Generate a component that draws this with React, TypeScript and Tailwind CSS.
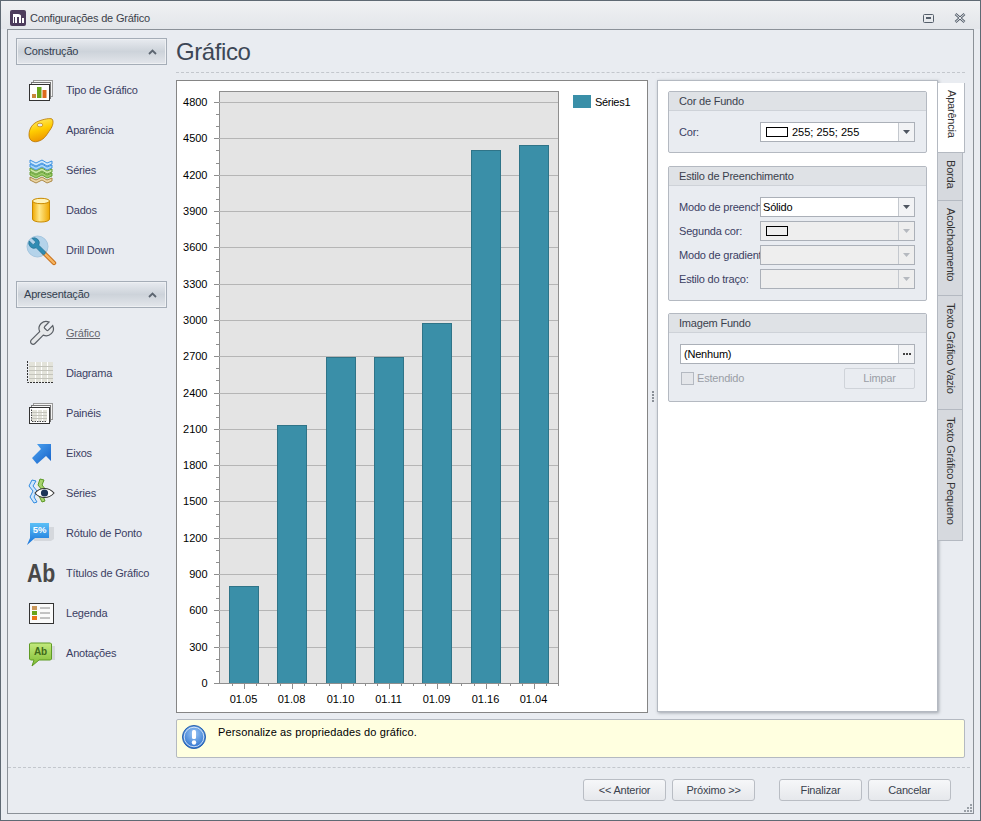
import React from "react";

const wrench =
  "M14.7 6.3a1 1 0 0 0 0 1.4l1.6 1.6a1 1 0 0 0 1.4 0l3.77-3.77a6 6 0 0 1-7.94 7.94l-6.91 6.91a2.12 2.12 0 0 1-3-3l6.91-6.91a6 6 0 0 1 7.94-7.94l-3.76 3.76z";

const Svg: React.FC<{ children: React.ReactNode }> = ({ children }) => (
  <svg width="32" height="32" viewBox="0 0 32 32" className="shrink-0">
    {children}
  </svg>
);

const CardStack = () => (
  <>
    <rect x="7.5" y="6.5" width="19" height="16" fill="#f4f4f4" stroke="#9a9a9a" />
    <rect x="5.5" y="8.5" width="19" height="16" fill="#f8f8f8" stroke="#777" />
    <rect x="3.5" y="10.5" width="20" height="16" fill="#fff" stroke="#333" />
  </>
);

const ChartTypeIcon = () => (
  <Svg>
    <CardStack />
    <rect x="6" y="20" width="4" height="4" fill="#c9873b" />
    <rect x="11" y="13" width="4.5" height="11" fill="#6aa51c" />
    <rect x="16.5" y="16" width="4" height="8" fill="#dd6a1c" />
  </Svg>
);

const PaletteIcon = () => (
  <Svg>
    <defs>
      <linearGradient id="pal" x1="0" y1="0" x2="0.3" y2="1">
        <stop offset="0" stopColor="#fff07a" />
        <stop offset="0.55" stopColor="#ffcc00" />
        <stop offset="1" stopColor="#ee9800" />
      </linearGradient>
    </defs>
    <path
      d="M26 5c2 2 1 7-2 11s-5 9-11 11c-5 2-10 0-10-6 0-7 4-12 10-14 5-2 11-3 13-2z"
      fill="url(#pal)"
      stroke="#b87400"
      strokeWidth="0.8"
    />
    <ellipse cx="14" cy="11" rx="2.8" ry="1.8" fill="#e9ecf1" stroke="#b87400" strokeWidth="0.6" />
  </Svg>
);

const Wave: React.FC<{ y: number; fill: string; stroke: string }> = ({ y, fill, stroke }) => (
  <path
    d={`M4 ${y}l6 3 6-3 5 3 5-2v3l-5 2-5-3-6 3-6-3z`}
    fill={fill}
    stroke={stroke}
    strokeWidth="0.9"
  />
);

const SeriesIcon = () => (
  <Svg>
    <Wave y={6} fill="#cfe8fc" stroke="#2f8ae0" />
    <Wave y={10} fill="#a9d6f8" stroke="#2f8ae0" />
    <Wave y={14} fill="#cbe6a8" stroke="#5b9a25" />
    <Wave y={18} fill="#9ccb6b" stroke="#5b9a25" />
    <Wave y={23} fill="#ecd6a6" stroke="#a5803a" />
  </Svg>
);

const DataIcon = () => (
  <Svg>
    <defs>
      <linearGradient id="cyl" x1="0" y1="0" x2="1" y2="0">
        <stop offset="0" stopColor="#f0a800" />
        <stop offset="0.4" stopColor="#ffe88a" />
        <stop offset="1" stopColor="#efa700" />
      </linearGradient>
    </defs>
    <path d="M6.5 7v18c0 4 17 4 17 0V7z" fill="url(#cyl)" stroke="#c98a00" />
    <ellipse cx="15" cy="7" rx="8.5" ry="2.7" fill="#fff3b8" stroke="#c98a00" />
  </Svg>
);

const DrillIcon = () => (
  <Svg>
    <circle cx="11.5" cy="12.5" r="10.5" fill="#b4d3ea" stroke="#a5c6df" />
    <path d="M18 19l10 10" stroke="#c9711c" strokeWidth="4.4" strokeLinecap="round" />
    <path d="M18 19l10 10" stroke="#f5b562" strokeWidth="2.4" strokeLinecap="round" />
    <g transform="translate(1 2) scale(0.88) translate(24 0) scale(-1 1)">
      <path d={wrench} fill="#2f8cb3" stroke="#1f6a8c" strokeWidth="0.7" />
    </g>
  </Svg>
);

const WrenchIcon = () => (
  <Svg>
    <g transform="translate(1 2) scale(1.2)">
      <path d={wrench} fill="#e6e8ea" stroke="#5a5f66" strokeWidth="1" />
    </g>
  </Svg>
);

const GridLines: React.FC<{ x: number; y: number; w: number; h: number; cols: number; rows: number }> = ({
  x,
  y,
  w,
  h,
  cols,
  rows,
}) => (
  <>
    <rect x={x} y={y} width={w} height={h} fill="#e3e3da" />
    {Array.from({ length: cols - 1 }, (_, i) => (
      <path key={i} d={`M${Math.floor(x + ((i + 1) * w) / cols) + 0.5} ${y}v${h}`} stroke="#fff" />
    ))}
    {Array.from({ length: rows - 1 }, (_, i) => (
      <path key={i} d={`M${x} ${Math.floor(y + ((i + 1) * h) / rows) + 0.5}h${w}`} stroke="#c4c4bc" />
    ))}
  </>
);

const DiagramIcon = () => (
  <Svg>
    <GridLines x={3} y={5} w={24} h={20} cols={4} rows={5} />
    <path d="M1.5 4v21.5H27" fill="none" stroke="#333" strokeDasharray="2 1" />
  </Svg>
);

const PanesIcon = () => (
  <Svg>
    <CardStack />
    <GridLines x={6} y={13} w={15} h={11} cols={3} rows={4} />
    <path d="M5.5 12.5v12H21" fill="none" stroke="#444" strokeDasharray="1.5 1" />
  </Svg>
);

const AxisIcon = () => (
  <Svg>
    <defs>
      <linearGradient id="arr" x1="0" y1="0" x2="1" y2="1">
        <stop offset="0" stopColor="#4fa6f2" />
        <stop offset="1" stopColor="#1560c8" />
      </linearGradient>
    </defs>
    <path d="M11 7h14v17l-5-5-9 8-5-6 9-9z" fill="url(#arr)" />
  </Svg>
);

const SeriesViewIcon = () => (
  <Svg>
    <path d="M6 3l-3 6 4 5-3 6 4 6 3-1-3-5 3-6-4-5 3-5z" fill="#cfe6fb" stroke="#2f8ae0" />
    <path d="M14 2l-2 6 4 5-3 6 3 6 3-1-2-5 3-6-4-5 2-5z" fill="#a8d36f" stroke="#5b9a25" />
    <path d="M9 16c5-6 14-6 19 0-5 6-14 6-19 0z" fill="#fff" stroke="#333" strokeWidth="1.1" />
    <circle cx="18.5" cy="16" r="3.6" fill="#1d3557" />
  </Svg>
);

const PercentIcon = () => (
  <Svg>
    <defs>
      <linearGradient id="bub" x1="0" y1="0" x2="0" y2="1">
        <stop offset="0" stopColor="#5cc0f7" />
        <stop offset="1" stopColor="#1570d8" />
      </linearGradient>
    </defs>
    <path d="M8 10h20v12l-3 2H8z" fill="#d5d8dd" />
    <path d="M4 6h19v15H9l-8 7 3-7z" fill="url(#bub)" />
    <text x="13.5" y="16" textAnchor="middle" fontSize="9.5" fontWeight="700" fill="#fff" fontFamily="Liberation Sans, sans-serif">
      5%
    </text>
  </Svg>
);

const TitlesIcon = () => (
  <Svg>
    <g transform="translate(1 25) scale(0.82 1)">
      <text fontSize="26" fontWeight="700" fill="#484848" fontFamily="Liberation Sans, sans-serif">
        Ab
      </text>
    </g>
  </Svg>
);

const LegendIcon = () => (
  <Svg>
    <rect x="3.5" y="6.5" width="24" height="20" fill="#fbfbfb" stroke="#333" />
    <rect x="6" y="9" width="5" height="4" fill="#c9975a" />
    <rect x="6" y="14" width="5" height="4" fill="#6aa51c" />
    <rect x="6" y="19" width="5" height="4" fill="#e9751b" />
    <path d="M14 11h10M14 16h10M14 21h10" stroke="#8a8a8a" />
  </Svg>
);

const NoteIcon = () => (
  <Svg>
    <defs>
      <linearGradient id="grn" x1="0" y1="0" x2="0" y2="1">
        <stop offset="0" stopColor="#c4ea7e" />
        <stop offset="1" stopColor="#7cbb30" />
      </linearGradient>
    </defs>
    <path d="M8 9h21v14H10z" fill="#d5d8dd" />
    <path d="M4.5 6h20l1 1v15l-1 1H13l-7 6 2-6H4.5l-1-1V7z" fill="url(#grn)" stroke="#5f9b25" />
    <text x="14.5" y="18" textAnchor="middle" fontSize="10" fontWeight="700" fill="#3f6a1a" fontFamily="Liberation Sans, sans-serif">
      Ab
    </text>
  </Svg>
);

const build = [
  { label: "Tipo de Gráfico", icon: <ChartTypeIcon /> },
  { label: "Aparência", icon: <PaletteIcon /> },
  { label: "Séries", icon: <SeriesIcon /> },
  { label: "Dados", icon: <DataIcon /> },
  { label: "Drill Down", icon: <DrillIcon /> },
];

const present = [
  { label: "Gráfico", icon: <WrenchIcon />, active: true },
  { label: "Diagrama", icon: <DiagramIcon /> },
  { label: "Painéis", icon: <PanesIcon /> },
  { label: "Eixos", icon: <AxisIcon /> },
  { label: "Séries", icon: <SeriesViewIcon /> },
  { label: "Rótulo de Ponto", icon: <PercentIcon /> },
  { label: "Títulos de Gráfico", icon: <TitlesIcon /> },
  { label: "Legenda", icon: <LegendIcon /> },
  { label: "Anotações", icon: <NoteIcon /> },
];

const Chevron = () => (
  <svg width="9" height="6" viewBox="0 0 9 6">
    <path d="M1 5l3.5-3.5L8 5" fill="none" stroke="#5c6570" strokeWidth="1.8" />
  </svg>
);

const GroupHeader: React.FC<{ title: string }> = ({ title }) => (
  <div className="h-[27px] flex items-center justify-between pl-[7px] pr-[9px] border border-[#a5adb7] bg-gradient-to-b from-[#e8ebf0] via-[#cdd3da] to-[#e3e6eb] text-[#333e4f] shadow-[inset_0_0_0_1px_#eef0f3]">
    <span>{title}</span>
    <Chevron />
  </div>
);

const NavRow: React.FC<{ label: string; icon: React.ReactNode; active?: boolean }> = ({ label, icon, active }) => (
  <div className="h-10 flex items-center gap-2 pl-[10px]">
    {icon}
    <span className={active ? "text-[#66666e] underline" : "text-[#3b4063]"}>{label}</span>
  </div>
);

const Sidebar = () => (
  <div className="w-[151px] shrink-0 mt-2">
    <GroupHeader title="Construção" />
    <div className="mt-[5px] mb-[11px]">
      {build.map((r) => (
        <NavRow key={r.label} {...r} />
      ))}
    </div>
    <GroupHeader title="Apresentação" />
    <div className="mt-[5px]">
      {present.map((r) => (
        <NavRow key={r.label} {...r} />
      ))}
    </div>
  </div>
);

const yLabels = [4800, 4500, 4200, 3900, 3600, 3300, 3000, 2700, 2400, 2100, 1800, 1500, 1200, 900, 600, 300, 0];
const bars = [
  { label: "01.05", x: 229, top: 586 },
  { label: "01.08", x: 277, top: 425 },
  { label: "01.10", x: 326, top: 357 },
  { label: "01.11", x: 374, top: 357 },
  { label: "01.09", x: 422, top: 323 },
  { label: "01.16", x: 471, top: 150 },
  { label: "01.04", x: 519, top: 145 },
];

// coordinates are page coords, shifted by the panel origin through the viewBox
const Chart = () => {
  const yOf = (v: number) => Math.round(683 - (v / 300) * 36.31) + 0.5;
  return (
    <svg width="470" height="631" viewBox="177 81 470 631" fontFamily="Liberation Sans, sans-serif" fontSize="11" letterSpacing="0">
      <rect x="219.5" y="91.5" width="339" height="592" fill="#e4e4e4" stroke="#8e8e8e" />
      {yLabels.map((v, i) => (
        <g key={v}>
          {i < 16 && <path d={`M214 ${yOf(v)}H558`} stroke="#b5b5b5" />}
          <path d={`M214 ${yOf(v)}H219`} stroke="#8e8e8e" />
          {i < 16 && (
            <>
              <path d={`M216 ${yOf(v - 100)}h3`} stroke="#8e8e8e" />
              <path d={`M216 ${yOf(v - 200)}h3`} stroke="#8e8e8e" />
            </>
          )}
          <text x="207.5" y={yOf(v) + 3.5} textAnchor="end" fill="#000">
            {v}
          </text>
        </g>
      ))}
      {bars.map((b) => (
        <g key={b.label}>
          <rect x={b.x + 0.5} y={b.top + 0.5} width="29" height={683 - b.top} fill="#3a8fa8" stroke="#2f7488" />
          <path d={`M${b.x + 15.5} 684v5`} stroke="#8e8e8e" />
          <path d={`M${b.x + 3.5} 684v2M${b.x + 27.5} 684v2M${b.x + 39.5} 684v2`} stroke="#8e8e8e" />
          <text x={b.x + 14.5} y="703" textAnchor="middle" fill="#000">
            {b.label}
          </text>
        </g>
      ))}
      <path d="M214 683.5H558" stroke="#8e8e8e" />
      <rect x="573" y="95" width="18" height="13" fill="#3a8fa8" />
      <text x="595" y="106" fill="#000" letterSpacing="-0.3">
        Séries1
      </text>
    </svg>
  );
};

const Arrow: React.FC<{ off?: boolean }> = ({ off }) => (
  <svg width="7" height="4" viewBox="0 0 7 4">
    <path d="M0 0h7L3.5 4z" fill={off ? "#b5b9bf" : "#4f5661"} />
  </svg>
);

const Combo: React.FC<{ children?: React.ReactNode; off?: boolean }> = ({ children, off }) => (
  <div className={`w-[155px] h-5 shrink-0 flex border border-[#abb0b8] ${off ? "bg-[#eeeeee]" : "bg-white"}`}>
    <div className="flex-1 flex items-center pl-[2px] text-black whitespace-nowrap overflow-hidden">{children}</div>
    <div className={`w-4 flex items-center justify-center border-l border-[#c4c8ce] ${off ? "bg-[#eeeeee]" : "bg-[#f2f3f5]"}`}>
      <Arrow off={off} />
    </div>
  </div>
);

const Swatch: React.FC<{ bg: string }> = ({ bg }) => (
  <span className={`inline-block w-[22px] h-[10px] border border-black ml-[3px] ${bg}`} />
);

const FieldRow: React.FC<{ label: string; children: React.ReactNode }> = ({ label, children }) => (
  <div className="flex items-center">
    <div className="w-[91px] pl-[10px] overflow-hidden whitespace-nowrap text-[#3b4063] shrink-0">{label}</div>
    {children}
  </div>
);

const GroupBox: React.FC<{ title: string; children: React.ReactNode; className: string }> = ({ title, children, className }) => (
  <div className={`w-[259px] border border-[#b4b9c1] rounded-[2px] bg-[#e9ecf1] ${className}`}>
    <div className="h-[19px] flex items-center pl-[10px] bg-[#dfe2e6] border-b border-[#ced2d8] text-[#3a3f4d]">{title}</div>
    {children}
  </div>
);

const PropsPanel = () => (
  <div className="w-[281px] shrink-0 h-[632px] bg-white border border-[#b4b9c1] shadow-[1px_1px_3px_#9ea3aa] pl-[10px] pt-[10px]">
    <GroupBox title="Cor de Fundo" className="h-[62px]">
      <div className="mt-[11px]">
        <FieldRow label="Cor:">
          <Combo>
            <Swatch bg="bg-white" />
            <span className="ml-1 tracking-normal">255; 255; 255</span>
          </Combo>
        </FieldRow>
      </div>
    </GroupBox>
    <GroupBox title="Estilo de Preenchimento" className="mt-[13px] h-[135px]">
      <div className="mt-[11px] flex flex-col gap-1">
        <FieldRow label="Modo de preenchimento:">
          <Combo>Sólido</Combo>
        </FieldRow>
        <FieldRow label="Segunda cor:">
          <Combo off>
            <Swatch bg="bg-[#eeeeee]" />
          </Combo>
        </FieldRow>
        <FieldRow label="Modo de gradiente:">
          <Combo off />
        </FieldRow>
        <FieldRow label="Estilo do traço:">
          <Combo off />
        </FieldRow>
      </div>
    </GroupBox>
    <GroupBox title="Imagem Fundo" className="mt-[12px] h-[89px]">
      <div className="mt-[11px] ml-[11px] w-[235px] h-5 flex border border-[#abb0b8] bg-white">
        <div className="flex-1 flex items-center pl-[3px] text-black">(Nenhum)</div>
        <div className="w-4 flex items-center justify-center gap-[1px] border-l border-[#c4c8ce] bg-[#f2f3f5]">
          <span className="w-[2px] h-[2px] bg-[#444]" />
          <span className="w-[2px] h-[2px] bg-[#444]" />
          <span className="w-[2px] h-[2px] bg-[#444]" />
        </div>
      </div>
      <div className="mt-1 ml-3 mr-[11px] flex items-center justify-between">
        <div className="flex items-center gap-[3px] text-[#9a9ea6]">
          <span className="w-[13px] h-[13px] border border-[#b4b9c1] bg-[#e4e6ea]" />
          Estendido
        </div>
        <div className="w-[71px] h-[21px] flex items-center justify-center border border-[#cfd3d9] rounded-[2px] text-[#9a9ea6]">Limpar</div>
      </div>
    </GroupBox>
  </div>
);

const tabs = [
  { label: "Aparência", h: "h-[70px]", active: true },
  { label: "Borda", h: "h-[48px]" },
  { label: "Acolchoamento", h: "h-[95px]" },
  { label: "Texto Gráfico Vazio", h: "h-[114px]" },
  { label: "Texto Gráfico Pequeno", h: "h-[131px]" },
];

const Tabs = () => (
  <div className="w-[27px] shrink-0 pt-[3px] flex flex-col">
    {tabs.map((t) => (
      <div
        key={t.label}
        className={`${t.h} flex items-start justify-center pt-[7px] border-r border-b border-[#b4b9c1] text-[#333] ${
          t.active ? "w-[27px] bg-white" : "w-[25px] bg-[#d6d9de]"
        }`}
      >
        <span className="whitespace-nowrap [writing-mode:vertical-rl]">{t.label}</span>
      </div>
    ))}
  </div>
);

const Btn: React.FC<{ label: string }> = ({ label }) => (
  <div className="w-[83px] h-[22px] flex items-center justify-center border border-[#b9bdc4] rounded-[3px] bg-gradient-to-b from-[#f6f7f9] to-[#e6e8ec] text-[#3a3f4d]">
    {label}
  </div>
);

export default function App() {
  return (
    <div className="w-[981px] h-[821px] flex flex-col bg-[#e9ecf1] border border-[#5f6973] text-[11px] leading-none tracking-[-0.2px] font-['Liberation_Sans',sans-serif]">
      <div className="h-[28px] shrink-0 flex items-center pt-[6px] pl-[9px] pr-[14px] bg-gradient-to-b from-[#f0f1f3] to-[#e3e6ea] text-[#3b3f4a]">
        <svg width="16" height="16" viewBox="0 0 16 16">
          <rect width="16" height="16" rx="2" fill="#4d3c5c" />
          <path d="M3 13V4h5c2 0 3 1 3 2v7H9V7H7v6H5V7H4v6zM12 13V8h2v5z" fill="#fff" />
        </svg>
        <span className="ml-1">Configurações de Gráfico</span>
        <svg className="ml-auto" width="11" height="9" viewBox="0 0 11 9">
          <rect x="0.5" y="0.5" width="10" height="8" rx="1" fill="none" stroke="#555f6b" />
          <rect x="3" y="3" width="5" height="2" fill="#555f6b" />
        </svg>
        <svg className="ml-[20px]" width="12" height="10" viewBox="0 0 12 10">
          <path d="M1.5 1l9 8M10.5 1l-9 8" stroke="#555f6b" strokeWidth="2.6" />
          <path d="M1.5 1l9 8M10.5 1l-9 8" stroke="#eef0f3" strokeWidth="1" />
        </svg>
      </div>
      <div className="flex-1 ml-[6px] mr-[6px] mb-[6px] flex flex-col border border-[#8b9198]">
        <div className="flex-1 flex pl-2 pr-2 gap-[9px]">
          <Sidebar />
          <div className="flex-1 flex flex-col">
            <div className="h-[43px] shrink-0 border-b border-dashed border-[#c3c7cd] pt-[8px] text-[24px] leading-[28px] tracking-[-0.4px] text-[#3d4756]">Gráfico</div>
            <div className="mt-[7px] flex h-[633px]">
              <div className="w-[472px] shrink-0 bg-white border border-[#858585]">
                <Chart />
              </div>
              <div className="w-[9px] shrink-0 flex flex-col items-center justify-center gap-[1px] pl-[1px]">
                {[0, 1, 2, 3].map((i) => (
                  <span key={i} className="w-[2px] h-[2px] bg-[#8a9098]" />
                ))}
              </div>
              <PropsPanel />
              <Tabs />
            </div>
            <div className="mt-[6px] h-[39px] flex items-start gap-[11px] pl-[4px] border border-[#b4b9c1] rounded-[2px] bg-[#ffffe0]">
              <svg className="mt-[4px]" width="26" height="26" viewBox="0 0 26 26">
                <defs>
                  <radialGradient id="inf" cx="0.5" cy="0.35" r="0.7">
                    <stop offset="0" stopColor="#9cc8f5" />
                    <stop offset="1" stopColor="#1e66c9" />
                  </radialGradient>
                </defs>
                <circle cx="13" cy="13" r="11.5" fill="url(#inf)" stroke="#2a62ad" />
                <circle cx="13" cy="13" r="9.8" fill="none" stroke="#fff" strokeOpacity="0.7" />
                <rect x="11" y="6" width="4" height="9" rx="1.5" fill="#fff" />
                <circle cx="13" cy="18.5" r="2.2" fill="#fff" />
              </svg>
              <span className="mt-[7px] text-black tracking-[0.13px]">Personalize as propriedades do gráfico.</span>
            </div>
          </div>
        </div>
        <div className="mr-[3px] border-b border-dashed border-[#c3c7cd] h-[9px]" />
        <div className="relative h-[45px] shrink-0 flex items-start pt-[11px] pl-[575px]">
          <Btn label="<< Anterior" />
          <div className="ml-[6px]">
            <Btn label="Próximo >>" />
          </div>
          <div className="ml-[24px]">
            <Btn label="Finalizar" />
          </div>
          <div className="ml-[6px]">
            <Btn label="Cancelar" />
          </div>
          <svg className="absolute right-0 bottom-0" width="10" height="10" viewBox="0 0 10 10" fill="#9aa0a7">
            <rect x="7" y="1" width="2" height="2" />
            <rect x="4" y="4" width="2" height="2" />
            <rect x="7" y="4" width="2" height="2" />
            <rect x="1" y="7" width="2" height="2" />
            <rect x="4" y="7" width="2" height="2" />
            <rect x="7" y="7" width="2" height="2" />
          </svg>
        </div>
      </div>
    </div>
  );
}
